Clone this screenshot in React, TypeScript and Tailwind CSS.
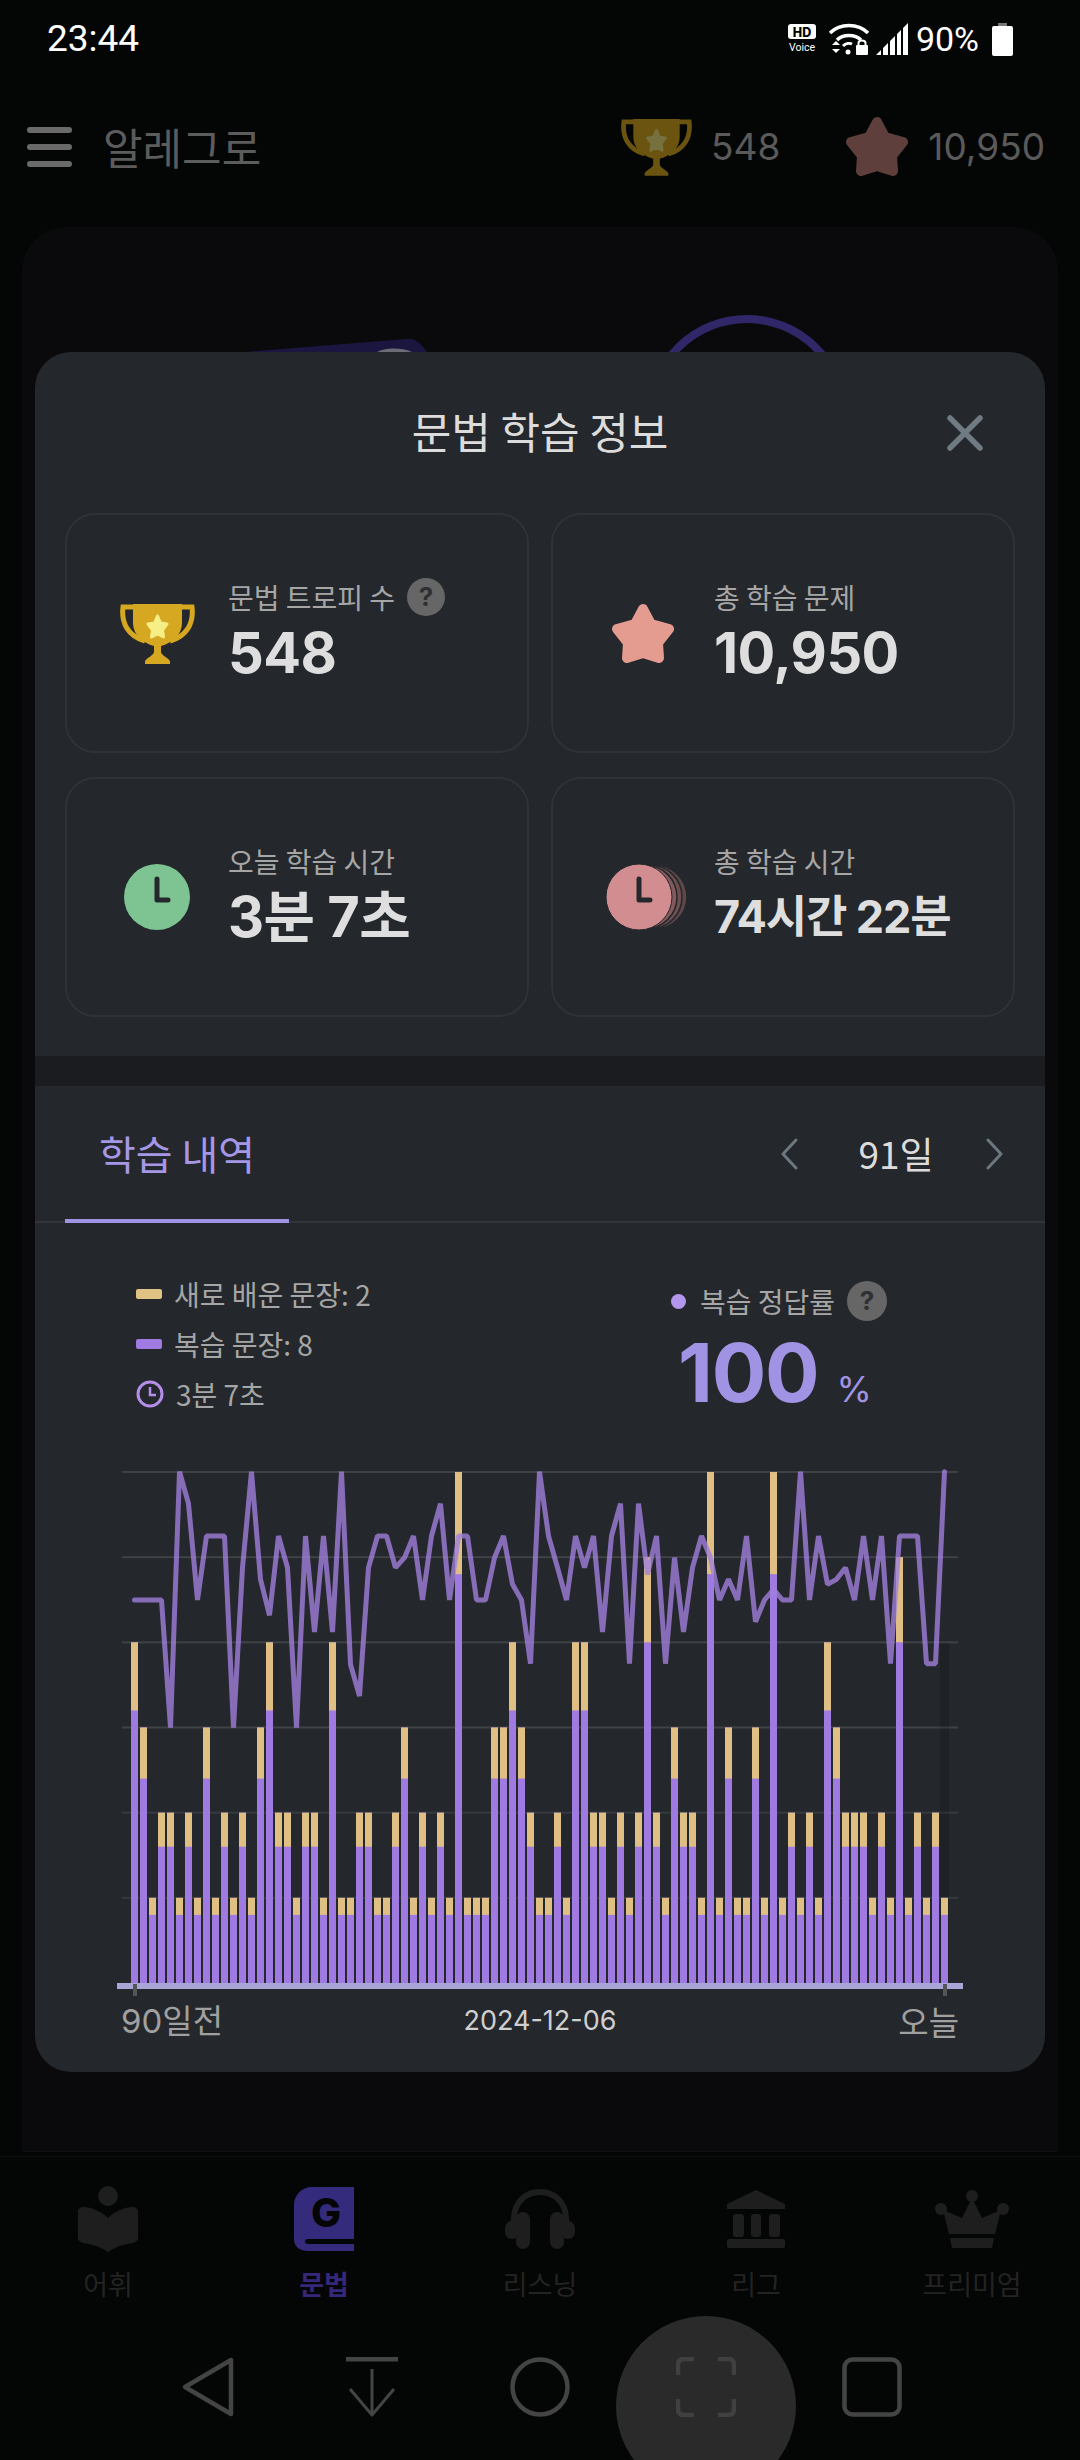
import React from 'react';

const KR = "font-['Noto_Sans_CJK_KR','Noto_Sans',sans-serif]";
const NUM = "font-['Inter','Noto_Sans_CJK_KR',sans-serif]";

// stacked bars: height in grid units for each of the 91 days
const levels = [
  4, 3, 1, 2, 2, 1, 2, 1, 3, 1, 2, 1, 2, 1, 3, 4, 2, 2, 1, 2, 2, 1, 4, 1, 1, 2, 2, 1, 1, 2,
  3, 1, 2, 1, 2, 1, 6, 1, 1, 1, 3, 3, 4, 3, 2, 1, 1, 2, 1, 4, 4, 2, 2, 1, 2, 1, 2, 5, 2, 1,
  3, 2, 2, 1, 6, 1, 3, 1, 1, 3, 1, 6, 1, 2, 1, 2, 1, 4, 3, 2, 2, 2, 1, 2, 1, 5, 1, 2, 1, 2, 1,
];

// review accuracy line, y in px below y=1450 (x3 from the crop)
const linePts = [
  447, 447, 447, 447, 830, 62, 158, 447, 255, 255, 255, 830, 350, 62, 385, 493, 255, 350, 830, 255,
  543, 255, 543, 62, 640, 735, 350, 255, 255, 350, 320, 255, 447, 255, 158, 447, 255, 255, 447, 447,
  320, 255, 400, 447, 638, 62, 255, 350, 447, 255, 350, 255, 543, 255, 158, 638, 158, 370, 255, 638,
  320, 543, 350, 255, 320, 447, 385, 447, 255, 512, 447, 415, 447, 447, 62, 447, 255, 400, 385, 350,
  447, 255, 447, 255, 638, 255, 255, 255, 638, 638, 62,
];

const BASE = 1982;
const UNIT = 85.17;

const Trophy = ({ cup, star, className }: { cup: string; star: string; className: string }) => (
  <svg viewBox="0 0 75 61" className={className}>
    <path d="M16 4H3C1 20 8 33 25 38" fill="none" stroke={cup} strokeWidth="5" />
    <path d="M59 4H72C74 20 67 33 50 38" fill="none" stroke={cup} strokeWidth="5" />
    <path d="M13 1H62V20C62 32 52 40 41 43V49C41 52 47 54 50 58V61H25V58C28 54 34 52 34 49V43C23 40 13 32 13 20Z" fill={cup} />
    <polygon points="37.5,13 40.5,20 47,21 42.5,27 43.5,34 37.5,31 31.5,34 32.5,27 28,21 34.5,20" fill={star} stroke={star} strokeWidth="3" strokeLinejoin="round" />
  </svg>
);

const Star = ({ color, className }: { color: string; className: string }) => (
  <svg viewBox="0 0 64 61" className={className}>
    <polygon
      points="32,6 40,21 58,26 47,40 48,55 32,50 16,55 17,40 6,26 24,21"
      fill={color}
      stroke={color}
      strokeWidth="10"
      strokeLinejoin="round"
    />
  </svg>
);

const Help = ({ size }: { size: string }) => (
  <span className={`${size} ${NUM} flex shrink-0 items-center justify-center rounded-full bg-[#666666] text-[26px] leading-none font-bold text-[#2f3033]`}>
    ?
  </span>
);

const StatCard = ({
  icon,
  label,
  value,
  help,
  small,
}: {
  icon: React.ReactNode;
  label: string;
  value: string;
  help?: boolean;
  small?: boolean;
}) => (
  <div className="flex h-[240px] items-center rounded-[30px] border-2 border-[#2f3236]">
    <div className="flex w-[161px] shrink-0 justify-center pl-[19px]">{icon}</div>
    <div className="flex flex-col">
      <div className={`${KR} flex h-[40px] items-center gap-[12px] text-[28px] text-[#a6a6a6]`}>
        {label}
        {help && <Help size="h-[38px] w-[38px]" />}
      </div>
      <div className={`${NUM} flex h-[72px] items-center font-bold text-[#dedede] ${small ? 'text-[45px] tracking-tight' : 'text-[56px] tracking-[-0.01em]'}`}>
        {value}
      </div>
    </div>
  </div>
);

const Chart = () => (
  <svg viewBox="117 1465 846 535" className="ml-[82px] h-[535px] w-[846px]">
    {[1, 2, 3, 4, 5, 6].map((k) => (
      <rect key={k} x="122" y={BASE - UNIT * k - 1} width="836" height="2" fill={k > 2 ? '#3f4246' : '#363a3e'} />
    ))}
    <rect x="940" y="1642" width="9" height="340" fill="#000000" opacity="0.12" />
    {levels.map((lv, i) => {
      const x = 131 + 9 * i;
      const top = BASE - UNIT * lv;
      return (
        <g key={i}>
          <rect x={x} y={top} width="7" height={UNIT * lv} fill="#9f7ae0" />
          <rect x={x} y={top} width="7" height={17.03 * lv} fill="#dfbf83" />
        </g>
      );
    })}
    <polyline
      points={linePts.map((v, i) => `${134.5 + 9 * i},${1450 + v / 3}`).join(' ')}
      fill="none"
      stroke="#a07fdc"
      strokeOpacity="0.8"
      strokeWidth="5"
      strokeLinejoin="bevel"
      strokeLinecap="round"
    />
    <rect x="117" y="1982" width="846" height="6" fill="#a9a5d6" />
    <rect x="133" y="1983" width="4" height="12" fill="#555555" />
    <rect x="943" y="1983" width="4" height="12" fill="#555555" />
  </svg>
);

const Modal = () => (
  <div className="absolute top-[352px] left-[35px] flex h-[1720px] w-[1010px] flex-col overflow-hidden rounded-[36px] bg-[#24272b]">
    {/* Title */}
    <div className="relative flex h-[153px] shrink-0 items-center justify-center pt-[3px]">
      <span className={`${KR} text-[43px] text-[#dcdcdc]`}>문법 학습 정보</span>
      <svg viewBox="0 0 36 36" className="absolute top-[63px] right-[62px] h-[36px] w-[36px]">
        <path d="M3 3L33 33M33 3L3 33" stroke="#6f7a82" strokeWidth="5.5" strokeLinecap="round" />
      </svg>
    </div>

    {/* Stat cards */}
    <div className="mt-[8px] grid grid-cols-2 gap-x-[22px] gap-y-[24px] px-[30px]">
      <StatCard
        icon={<Trophy cup="#d6a821" star="#f6ef86" className="h-[61px] w-[75px]" />}
        label="문법 트로피 수"
        value="548"
        help
      />
      <StatCard icon={<Star color="#e59c90" className="h-[61px] w-[64px]" />} label="총 학습 문제" value="10,950" />
      <StatCard
        icon={
          <svg viewBox="0 0 66 66" className="h-[66px] w-[66px]">
            <circle cx="33" cy="33" r="33" fill="#7ec493" />
            <path d="M33 15V36H44" fill="none" stroke="#24272b" strokeWidth="5" strokeLinecap="round" strokeLinejoin="round" />
          </svg>
        }
        label="오늘 학습 시간"
        value="3분 7초"
      />
      <StatCard
        icon={
          <svg viewBox="0 0 82 66" className="ml-[8px] h-[66px] w-[82px]">
            <circle cx="49" cy="33" r="32" fill="#5c4749" stroke="#24272b" strokeWidth="1.5" />
            <circle cx="44" cy="33" r="32" fill="#6e5053" stroke="#24272b" strokeWidth="1.5" />
            <circle cx="39" cy="33" r="32" fill="#835a5e" stroke="#24272b" strokeWidth="1.5" />
            <circle cx="33" cy="33" r="33" fill="#d28d90" stroke="#24272b" strokeWidth="1" />
            <path d="M33 15V36H44" fill="none" stroke="#24272b" strokeWidth="5" strokeLinecap="round" strokeLinejoin="round" />
          </svg>
        }
        label="총 학습 시간"
        value="74시간 22분"
        small
      />
    </div>

    <div className="mt-[39px] h-[30px] shrink-0 bg-[#1b1c20]" />

    {/* Tab row */}
    <div className="flex h-[137px] shrink-0 items-stretch justify-between border-b-2 border-[#33353a]">
      <div className={`${KR} ml-[30px] -mb-[2px] flex w-[224px] items-center justify-center border-b-4 border-[#a193e3] text-[40px] text-[#a597e6]`}>
        학습 내역
      </div>
      <div className="flex items-center">
        <svg viewBox="0 0 18 32" className="h-[32px] w-[18px]">
          <path d="M16 2L3 16L16 30" fill="none" stroke="#6d777f" strokeWidth="3" strokeLinecap="round" strokeLinejoin="round" />
        </svg>
        <span className={`${KR} w-[188px] pl-[8px] text-center text-[37px] text-[#dcdcdc]`}>91일</span>
        <svg viewBox="0 0 18 32" className="mr-[41px] h-[32px] w-[18px]">
          <path d="M2 2L15 16L2 30" fill="none" stroke="#6d777f" strokeWidth="3" strokeLinecap="round" strokeLinejoin="round" />
        </svg>
      </div>
    </div>

    {/* Legend and accuracy */}
    <div className="flex h-[243px] shrink-0">
      <div className={`${KR} flex w-[636px] flex-col pt-[46px] pl-[101px] text-[28px] text-[#a6a6a6]`}>
        <div className="flex h-[50px] items-center">
          <span className="mr-[12px] h-[10px] w-[26px] rounded-[2px] bg-[#e0c285]" />
          새로 배운 문장: 2
        </div>
        <div className="flex h-[50px] items-center">
          <span className="mr-[12px] h-[10px] w-[26px] rounded-[2px] bg-[#9f7ae0]" />
          복습 문장: 8
        </div>
        <div className="flex h-[50px] items-center">
          <svg viewBox="0 0 28 28" className="mr-[12px] h-[28px] w-[28px]">
            <circle cx="14" cy="14" r="12" fill="none" stroke="#b58ee8" strokeWidth="3" />
            <path d="M14 7V15H20" fill="none" stroke="#b58ee8" strokeWidth="2.5" />
          </svg>
          3분 7초
        </div>
      </div>
      <div className="flex flex-col pt-[58px]">
        <div className={`${KR} flex h-[40px] items-center text-[28px] text-[#a6a6a6]`}>
          <span className="mr-[14px] h-[15px] w-[15px] rounded-full bg-[#b596ee]" />
          복습 정답률
          <span className="ml-[12px]">
            <Help size="h-[40px] w-[40px]" />
          </span>
        </div>
        <div className={`${NUM} mt-[4px] flex items-baseline pl-[7px] text-[#a193e3]`}>
          <span className="text-[81px] leading-[96px] font-bold tracking-[-0.015em]">100</span>
          <span className="ml-[18px] text-[36px] leading-none">%</span>
        </div>
      </div>
    </div>

    <Chart />

    {/* Axis labels */}
    <div className="grid grid-cols-3 items-center px-[86px]">
      <span className={`${NUM} text-[33px] leading-[40px] text-[#a0a0a0]`}>90일전</span>
      <span className={`${NUM} text-center text-[27px] leading-[40px] text-[#cfcfcf]`}>2024-12-06</span>
      <span className={`${KR} text-right text-[33px] leading-[40px] text-[#a0a0a0]`}>오늘</span>
    </div>
  </div>
);

const DIM = '#1e1e1e';

const navItems = [
  {
    label: '어휘',
    icon: (
      <svg viewBox="0 0 60 66" className="h-[66px] w-[60px]">
        <circle cx="30" cy="10" r="10" fill={DIM} />
        <path d="M30 32C23 25 13 21 5 21C2 21 0 23 0 26V52C0 55 2 56 5 57C14 58 23 61 30 66C37 61 46 58 55 57C58 56 60 55 60 52V26C60 23 58 21 55 21C47 21 37 25 30 32Z" fill={DIM} />
      </svg>
    ),
  },
  {
    label: '문법',
    active: true,
    icon: (
      <svg viewBox="0 0 60 64" className="h-[64px] w-[60px]">
        <path d="M18 0H60V52H14C10 52 10 57 14 57H60V64H14C6 64 0 60 0 52V18C0 8 8 0 18 0Z" fill="#352b7c" />
        <text x="32" y="40" textAnchor="middle" fontFamily="Inter, sans-serif" fontWeight="800" fontSize="40" fill="#050505">G</text>
      </svg>
    ),
  },
  {
    label: '리스닝',
    icon: (
      <svg viewBox="0 0 70 60" className="h-[60px] w-[70px]">
        <path d="M9 36V30C9 14 20 3 35 3S61 14 61 30V36" fill="none" stroke={DIM} strokeWidth="6" />
        <rect x="11" y="23" width="14" height="37" rx="7" fill={DIM} />
        <rect x="45" y="23" width="14" height="37" rx="7" fill={DIM} />
        <rect x="0" y="32" width="14" height="18" rx="7" fill={DIM} />
        <rect x="56" y="32" width="14" height="18" rx="7" fill={DIM} />
      </svg>
    ),
  },
  {
    label: '리그',
    icon: (
      <svg viewBox="0 0 58 58" className="h-[58px] w-[58px]">
        <path d="M29 0L58 14V19H0V14Z" fill={DIM} />
        <rect x="6" y="24" width="11" height="23" rx="3" fill={DIM} />
        <rect x="24" y="24" width="10" height="23" rx="3" fill={DIM} />
        <rect x="42" y="24" width="11" height="23" rx="3" fill={DIM} />
        <rect x="0" y="49" width="58" height="9" rx="2" fill={DIM} />
      </svg>
    ),
  },
  {
    label: '프리미엄',
    icon: (
      <svg viewBox="0 0 74 58" className="h-[58px] w-[74px]">
        <circle cx="37" cy="6" r="6" fill={DIM} />
        <circle cx="6" cy="19" r="6" fill={DIM} />
        <circle cx="68" cy="19" r="6" fill={DIM} />
        <path d="M37 8L47 28L66 20L60 44H14L8 20L27 28Z" fill={DIM} />
        <path d="M15 48H59L57 58H17Z" fill={DIM} />
      </svg>
    ),
  },
];

const App = () => {
  return (
    <div className={`${KR} relative flex h-[2460px] w-[1080px] flex-col overflow-hidden bg-[#040505]`}>
      {/* Status bar */}
      <div className="flex h-[80px] shrink-0 items-start justify-between pt-[19px] pr-[67px] pl-[47px] font-['Roboto',sans-serif] text-white">
        <span className="text-[37px] leading-[40px]">23:44</span>
        <div className="flex h-[40px] items-center">
          <svg viewBox="0 0 30 30" className="h-[30px] w-[30px]">
            <rect x="1" y="0" width="28" height="15" rx="3" fill="#ffffff" />
            <text x="15" y="12.5" textAnchor="middle" fontFamily="Inter, sans-serif" fontWeight="800" fontSize="12.5" fill="#000000">HD</text>
            <text x="15" y="27" textAnchor="middle" fontFamily="Roboto, sans-serif" fontSize="10.5" fill="#ffffff">Voice</text>
          </svg>
          <svg viewBox="0 0 40 32" className="ml-[12px] h-[32px] w-[40px]">
            <path d="M1 10C11 0 29 0 39 10" fill="none" stroke="#ffffff" strokeWidth="3.5" />
            <path d="M8 17C14 11 26 11 32 17" fill="none" stroke="#ffffff" strokeWidth="3.5" />
            <path d="M14 23C17 20 21 20 23 21" fill="none" stroke="#ffffff" strokeWidth="3" />
            <circle cx="19" cy="29" r="2.5" fill="#ffffff" />
            <path d="M3 22L7 18L11 22ZM3 26L11 26L7 30Z" fill="#ffffff" />
            <rect x="27" y="22" width="12" height="10" rx="1" fill="#ffffff" />
            <path d="M29.5 22V20C29.5 16.5 36.5 16.5 36.5 20V22" fill="none" stroke="#ffffff" strokeWidth="2" />
          </svg>
          <svg viewBox="0 0 32 32" className="ml-[7px] h-[32px] w-[32px]">
            <path d="M0 32L5 27V32ZM7 25L12 20V32H7ZM14 18L19 13V32H14ZM21 11L25 7V32H21ZM27 5L32 0V32H27Z" fill="#ffffff" />
          </svg>
          <span className="ml-[8px] text-[34px] leading-[40px]">90%</span>
          <svg viewBox="0 0 21 33" className="ml-[13px] h-[33px] w-[21px]">
            <rect x="6" y="0" width="9" height="4" fill="#777777" />
            <rect x="0" y="3" width="21" height="30" rx="2" fill="#ffffff" />
          </svg>
        </div>
      </div>

      {/* App bar, dimmed behind the dialog */}
      <div className="flex h-[147px] shrink-0 items-center pr-[35px] pb-[14px] pl-[27px]">
        <div className="flex w-[45px] flex-col gap-[11px]">
          <span className="h-[6px] rounded-full bg-[#6a6a6a]" />
          <span className="h-[6px] rounded-full bg-[#6a6a6a]" />
          <span className="h-[6px] rounded-full bg-[#6a6a6a]" />
        </div>
        <span className="ml-[31px] text-[43px] leading-none text-[#5c5c5c]">알레그로</span>
        <div className="ml-auto flex items-center">
          <Trophy cup="#6b5410" star="#77713f" className="h-[58px] w-[71px]" />
          <span className={`${NUM} ml-[19px] text-[37px] text-[#5a5a5a]`}>548</span>
          <Star color="#5e3f3b" className="ml-[65px] h-[61px] w-[64px]" />
          <span className={`${NUM} ml-[19px] text-[37px] text-[#5a5a5a]`}>10,950</span>
        </div>
      </div>

      {/* Page content behind the dialog */}
      <div className="relative mx-[22px] h-[1925px] shrink-0 overflow-hidden rounded-t-[44px] border-b border-[#0d1111] bg-[#0a0a0c]">
        <svg viewBox="0 0 1036 130" className="absolute top-[85px] left-0 h-[130px] w-[1036px]">
          <path d="M224 40L384 27C392 26 398 30 405 40Z" fill="#1b1640" />
          <path d="M355 40C362 36 378 35 390 40Z" fill="#6b6b75" />
          <circle cx="725" cy="104" r="97" fill="none" stroke="#2f2768" strokeWidth="8" />
        </svg>
      </div>

      {/* Tab bar */}
      <div className="mt-[4px] grid shrink-0 grid-cols-5 border-t border-[#0d1111] pt-[28px]">
        {navItems.map((item) => (
          <div key={item.label} className="flex flex-col items-center">
            <div className="flex h-[68px] items-center">{item.icon}</div>
            <span className={`mt-[14px] text-[27px] leading-[34px] ${item.active ? 'font-bold text-[#35287a]' : 'text-[#232323]'}`}>
              {item.label}
            </span>
          </div>
        ))}
      </div>

      {/* System navigation */}
      <div className="flex min-h-0 flex-1 items-center pt-[13px] pl-[181px]">
        <svg viewBox="0 0 54 62" className="h-[62px] w-[54px]">
          <path d="M50 4V58L4 31Z" fill="none" stroke="#444444" strokeWidth="4.5" strokeLinejoin="round" />
        </svg>
        <svg viewBox="0 0 52 60" className="ml-[111px] h-[60px] w-[52px]">
          <path d="M0 2H52" stroke="#444444" strokeWidth="5" />
          <path d="M26 12V58M4 32L26 58L48 32" fill="none" stroke="#444444" strokeWidth="3" strokeLinejoin="round" />
        </svg>
        <svg viewBox="0 0 60 60" className="ml-[112px] h-[60px] w-[60px]">
          <circle cx="30" cy="30" r="27.5" fill="none" stroke="#444444" strokeWidth="4.5" />
        </svg>
        <div className="mt-[2px] ml-[46px] flex h-[180px] w-[180px] shrink-0 items-center justify-center self-start rounded-full bg-[#2a2a2a]">
          <svg viewBox="0 0 60 60" className="-mt-[38px] h-[60px] w-[60px]">
            <path d="M18 2H8C4 2 2 4 2 8V18M42 2H52C56 2 58 4 58 8V18M18 58H8C4 58 2 56 2 52V42M42 58H52C56 58 58 56 58 52V42" fill="none" stroke="#404040" strokeWidth="4.5" />
          </svg>
        </div>
        <svg viewBox="0 0 60 60" className="ml-[46px] h-[60px] w-[60px]">
          <rect x="2.5" y="2.5" width="55" height="55" rx="8" fill="none" stroke="#444444" strokeWidth="4.5" />
        </svg>
      </div>

      <Modal />
    </div>
  );
};

export default App;
